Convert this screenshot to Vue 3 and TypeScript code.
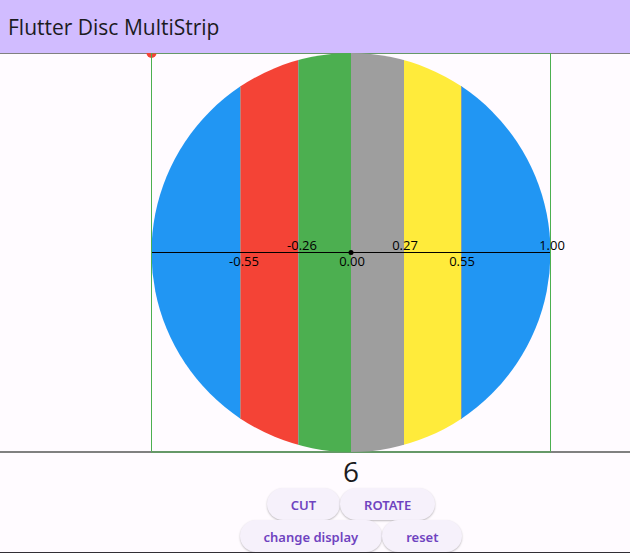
<script setup lang="ts">
import { computed, ref } from 'vue'

interface Strip {
  from: number
  to: number
  color: string
}

interface Mark {
  at: number
  label: string
  y: number
}

const strips: Strip[] = [
  { from: 0, to: 89, color: '#2196f3' },
  { from: 89, to: 147, color: '#f44336' },
  { from: 147, to: 200, color: '#4caf50' },
  { from: 200, to: 253, color: '#9e9e9e' },
  { from: 253, to: 310, color: '#ffeb3b' },
  { from: 310, to: 400, color: '#2196f3' },
]

const marks: Mark[] = [
  { at: 93, label: '-0.55', y: 213 },
  { at: 151, label: '-0.26', y: 197 },
  { at: 201, label: '0.00', y: 213 },
  { at: 254, label: '0.27', y: 197 },
  { at: 311, label: '0.55', y: 213 },
  { at: 401, label: '1.00', y: 197 },
]

const seams = [89, 147, 252, 310]

const cuts = ref(6)
const turn = ref(0)
const showLabels = ref(true)
const rotation = computed(() => `rotate(${turn.value} 200 199)`)

function reset() {
  cuts.value = 6
  turn.value = 0
  showLabels.value = true
}
</script>

<template>
  <div class="page">
    <header class="app-bar">
      <h1>Flutter Disc MultiStrip</h1>
    </header>
    <main>
      <section class="stage">
        <svg class="disc" viewBox="0 0 400 400" role="img" aria-label="Disc strips">
          <defs>
            <clipPath id="disc-clip"><circle cx="200" cy="199.5" r="199.5" /></clipPath>
          </defs>
          <circle cx="0.5" cy="0" r="5" fill="#f44336" />
          <path d="M0 .5H400" stroke="#4caf50" stroke-opacity=".5" />
          <path d="M0 399H400" stroke="#4caf50" stroke-width="2" stroke-opacity=".5" />
          <g :transform="rotation">
            <g clip-path="url(#disc-clip)">
              <rect
                v-for="strip in strips"
                :key="strip.from"
                :x="strip.from"
                y="0"
                :width="strip.to - strip.from"
                height="400"
                :fill="strip.color"
              />
              <path
                v-for="seam in seams"
                :key="seam"
                :d="`M${seam + 0.5} 0V400`"
                stroke="#9e9e9e"
                stroke-opacity=".7"
              />
            </g>
          </g>
          <path d="M.5 0V398M399.5 0V398" stroke="#4caf50" />
          <path d="M1 199.5H399" stroke="#000" />
          <circle cx="200" cy="199.5" r="2.5" />
          <g v-if="showLabels" class="marks">
            <text v-for="mark in marks" :key="mark.label" :x="mark.at" :y="mark.y">{{ mark.label }}</text>
          </g>
        </svg>
      </section>
      <section class="controls">
        <output class="count">{{ cuts }}</output>
        <div class="row">
          <button type="button" @click="cuts++">CUT</button>
          <button type="button" @click="turn += 15">ROTATE</button>
        </div>
        <div class="row">
          <button type="button" @click="showLabels = !showLabels">change display</button>
          <button type="button" @click="reset">reset</button>
        </div>
      </section>
    </main>
  </div>
</template>

<style>
body {
  background: #fffbff;
}
</style>

<style scoped>
.page {
  box-sizing: border-box;
  min-height: 100vh;
  border-bottom: 1px solid #322f35;
  overflow: hidden;
  color: #1c1b1e;
  font-family: "Open Sans", "Noto Sans", sans-serif;
}

.app-bar {
  padding: 13px 8px 12px;
  background: #d1bcff;
}

h1 {
  margin: 0;
  font-size: 21px;
  font-weight: 400;
  line-height: 28px;
}

.stage {
  display: flex;
  justify-content: center;
  padding-left: 72px;
  overflow: hidden;
  box-shadow: inset 0 1px #808080, inset 0 -2px #808080;
}

.disc {
  display: block;
  width: 400px;
  height: 400px;
  overflow: visible;
}

.marks {
  font-size: 13px;
  text-anchor: middle;
  fill: #000;
}

.controls {
  display: flex;
  flex-direction: column;
  align-items: center;
  padding-left: 72px;
}

.count {
  padding-top: 2px;
  font-size: 28px;
  line-height: 33px;
}

.row {
  display: flex;
}

button {
  height: 32px;
  padding: 1px 24px 0;
  border: 0;
  border-radius: 16px;
  background: #f6f1fb;
  box-shadow: 0 1px 2px rgb(0 0 0 / 25%);
  color: #6f43c0;
  font: 600 13px "Noto Sans", "Open Sans", sans-serif;
  cursor: pointer;
}
</style>
